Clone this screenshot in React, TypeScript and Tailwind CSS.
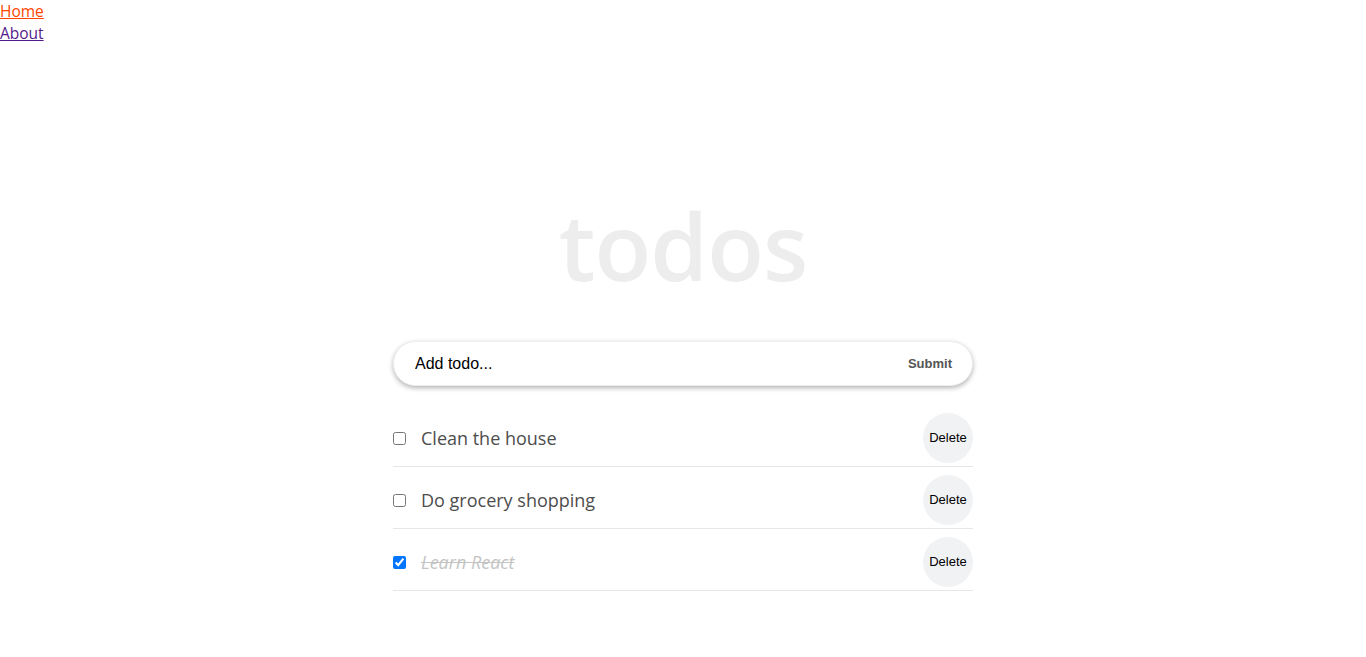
import React from "react";

const todos = [
  { text: "Clean the house", done: false },
  { text: "Do grocery shopping", done: false },
  { text: "Learn React", done: true },
];

export default function App() {
  return (
    <div className="min-h-screen bg-white font-['Open_Sans',sans-serif]">
      <nav className="flex flex-col text-[15.5px] leading-[22px]">
        <a href="#" className="text-[#ff4500] underline w-fit">Home</a>
        <a href="#" className="text-[#551a8b] underline w-fit">About</a>
      </nav>
      <div className="w-[580px] mx-auto">
        <h1 className="text-center h-[100px] text-[93px] leading-[100px] font-semibold text-[#ededed] mt-[151px] tracking-[-1px]">
          todos
        </h1>
        <form
          className="mt-[46px] h-[45px] rounded-full bg-white flex items-center pl-[21px] pr-[20px] shadow-[0_2px_5px_rgba(0,0,0,0.3)] border border-[#eee]"
          onSubmit={(e) => e.preventDefault()}
        >
          <input
            className="flex-1 outline-none text-[16px] text-black placeholder:text-black font-['Liberation_Sans',sans-serif]"
            placeholder="Add todo..."
          />
          <button className="text-[13px] font-bold text-[#555] font-['Liberation_Sans',sans-serif]">
            Submit
          </button>
        </form>
        <ul className="mt-[19px]">
          {todos.map((t) => (
            <li
              key={t.text}
              className="flex items-center pt-[8px] pb-[3px] border-b border-[#e6e6e6]"
            >
              <input
                type="checkbox"
                defaultChecked={t.done}
                className="w-[13px] h-[13px] m-0 accent-[#0075ff]"
              />
              <span
                className={
                  "ml-[15px] flex-1 text-[18px] " +
                  (t.done ? "italic line-through text-[#c4c4c4]" : "text-[#4d4d4d]")
                }
              >
                {t.text}
              </span>
              <button className="w-[50px] h-[50px] rounded-full bg-[#f1f2f4] text-[13px] text-black font-['Liberation_Sans',sans-serif]">
                Delete
              </button>
            </li>
          ))}
        </ul>
      </div>
    </div>
  );
}
